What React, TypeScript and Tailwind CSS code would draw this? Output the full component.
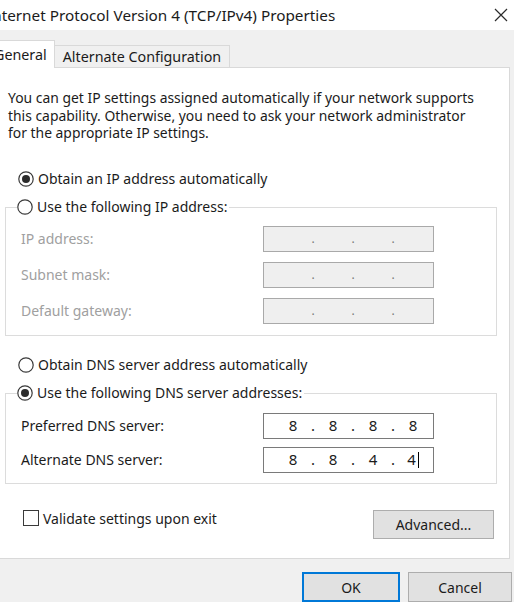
import React from 'react';

function Radio({ checked }: { checked?: boolean }) {
  return (
    <svg width="16" height="16" viewBox="0 0 16 16" className="shrink-0">
      <circle cx="8" cy="8" r="7.2" fill="white" stroke="#3a3a3a" strokeWidth="1.2" />
      {checked && <circle cx="8" cy="8" r="4" fill="#2b2b2b" />}
    </svg>
  );
}

function IpField({ values, disabled, cursor }: { values: string[]; disabled?: boolean; cursor?: boolean }) {
  return (
    <div
      className={
        'ml-auto w-[171px] h-[26px] flex items-center pl-[14px] ' +
        (disabled ? 'bg-[#efefef] border border-[#a9a9a9]' : 'bg-white border border-[#7a7a7a]')
      }
    >
      {values.map((v, i) => (
        <React.Fragment key={i}>
          <span className="w-[30px] text-center text-[15px] text-[#1b1b1b] flex items-center justify-center">
            {v}
            {cursor && i === 3 && <span className="inline-block w-px h-[16px] bg-black ml-[2px]" />}
          </span>
          {i < 3 && (
            <span className={'w-[10px] text-center ' + (disabled ? 'text-[#7a7a7a] text-[12px]' : 'text-[15px]')}>.</span>
          )}
        </React.Fragment>
      ))}
    </div>
  );
}

function Row({ label, children, disabled }: { label: string; children: React.ReactNode; disabled?: boolean }) {
  return (
    <div className="flex items-center h-[26px] pr-[62px]">
      <span className={'pl-[15px] text-[14px] ' + (disabled ? 'text-[#a0a0a0]' : 'text-[#1b1b1b]')}>{label}</span>
      {children}
    </div>
  );
}

export default function App() {
  const blank = ['', '', '', ''];
  return (
    <div className="w-[514px] h-[602px] overflow-hidden bg-[#f0f0f0] font-['Noto_Sans',sans-serif] text-[#1b1b1b]">
      {/* title bar */}
      <div className="h-[30px] bg-white flex items-center justify-between">
        <span className="-ml-[13px] text-[15.3px] whitespace-nowrap">Internet Protocol Version 4 (TCP/IPv4) Properties</span>
        <svg width="14" height="14" viewBox="0 0 14 14" className="mr-[6px]">
          <path d="M1 1 L13 13 M13 1 L1 13" stroke="#2a2a2a" strokeWidth="1.2" />
        </svg>
      </div>

      {/* tabs */}
      <div className="flex items-end h-[38px] -ml-[14px]">
        <div className="h-[28px] bg-white border border-b-0 border-[#d9d9d9] px-[7px] flex items-center text-[14.3px]">General</div>
        <div className="h-[23px] border border-l-0 border-b-0 border-[#d9d9d9] px-[8px] flex items-center text-[14.3px]">
          Alternate Configuration
        </div>
      </div>

      {/* panel */}
      <div className="-ml-[14px] w-[524px] h-[492px] -mt-px bg-white border border-[#d9d9d9]">
        <div className="ml-[13px] pt-[21px] pr-[13px]">
          <p className="pl-[8px] text-[13.9px] leading-[17.5px] whitespace-nowrap">
            You can get IP settings assigned automatically if your network supports
            <br />
            this capability. Otherwise, you need to ask your network administrator
            <br />
            for the appropriate IP settings.
          </p>

          <div className="mt-[28px] pl-[18px] flex items-center gap-[4px] h-[18px] text-[14px]">
            <Radio checked />
            <span>Obtain an IP address automatically</span>
          </div>

          <div className="mt-[19px] ml-[5px] w-[492px] border border-[#dcdcdc] pb-[11px]">
            <div className="-mt-[10px] ml-[11px] w-fit bg-white pr-[2px] flex items-center gap-[4px] h-[18px] text-[14px]">
              <Radio />
              <span>Use the following IP address:</span>
            </div>
            <div className="mt-[10px] flex flex-col gap-[10px]">
              <Row label="IP address:" disabled>
                <IpField values={blank} disabled />
              </Row>
              <Row label="Subnet mask:" disabled>
                <IpField values={blank} disabled />
              </Row>
              <Row label="Default gateway:" disabled>
                <IpField values={blank} disabled />
              </Row>
            </div>
          </div>

          <div className="mt-[20px] pl-[18px] flex items-center gap-[4px] h-[18px] text-[14px]">
            <Radio />
            <span>Obtain DNS server address automatically</span>
          </div>

          <div className="mt-[19px] ml-[5px] w-[492px] border border-[#dcdcdc] pb-[10px]">
            <div className="-mt-[10px] ml-[11px] w-fit bg-white pr-[2px] flex items-center gap-[4px] h-[18px] text-[14px]">
              <Radio checked />
              <span>Use the following DNS server addresses:</span>
            </div>
            <div className="mt-[11px] flex flex-col gap-[8px]">
              <Row label="Preferred DNS server:">
                <IpField values={['8', '8', '8', '8']} />
              </Row>
              <Row label="Alternate DNS server:">
                <IpField values={['8', '8', '4', '4']} cursor />
              </Row>
            </div>
          </div>

          <div className="mt-[26px] flex items-start justify-between pl-[23px] pr-[2px]">
            <label className="flex items-center gap-[4px] h-[17px] text-[14px]">
              <span className="w-[16px] h-[16px] border border-[#3a3a3a] bg-white" />
              <span>Validate settings upon exit</span>
            </label>
            <button className="w-[121px] h-[29px] bg-[#e1e1e1] border border-[#adadad] text-[14px]">Advanced...</button>
          </div>
        </div>
      </div>

      {/* footer */}
      <div className="mt-[13px] flex justify-end gap-[8px] pr-[2px]">
        <button className="w-[98px] h-[30px] bg-[#e1e1e1] border-2 border-[#0078d7] text-[14px]">OK</button>
        <button className="w-[104px] h-[30px] bg-[#e1e1e1] border border-[#adadad] text-[14px]">Cancel</button>
      </div>
    </div>
  );
}
